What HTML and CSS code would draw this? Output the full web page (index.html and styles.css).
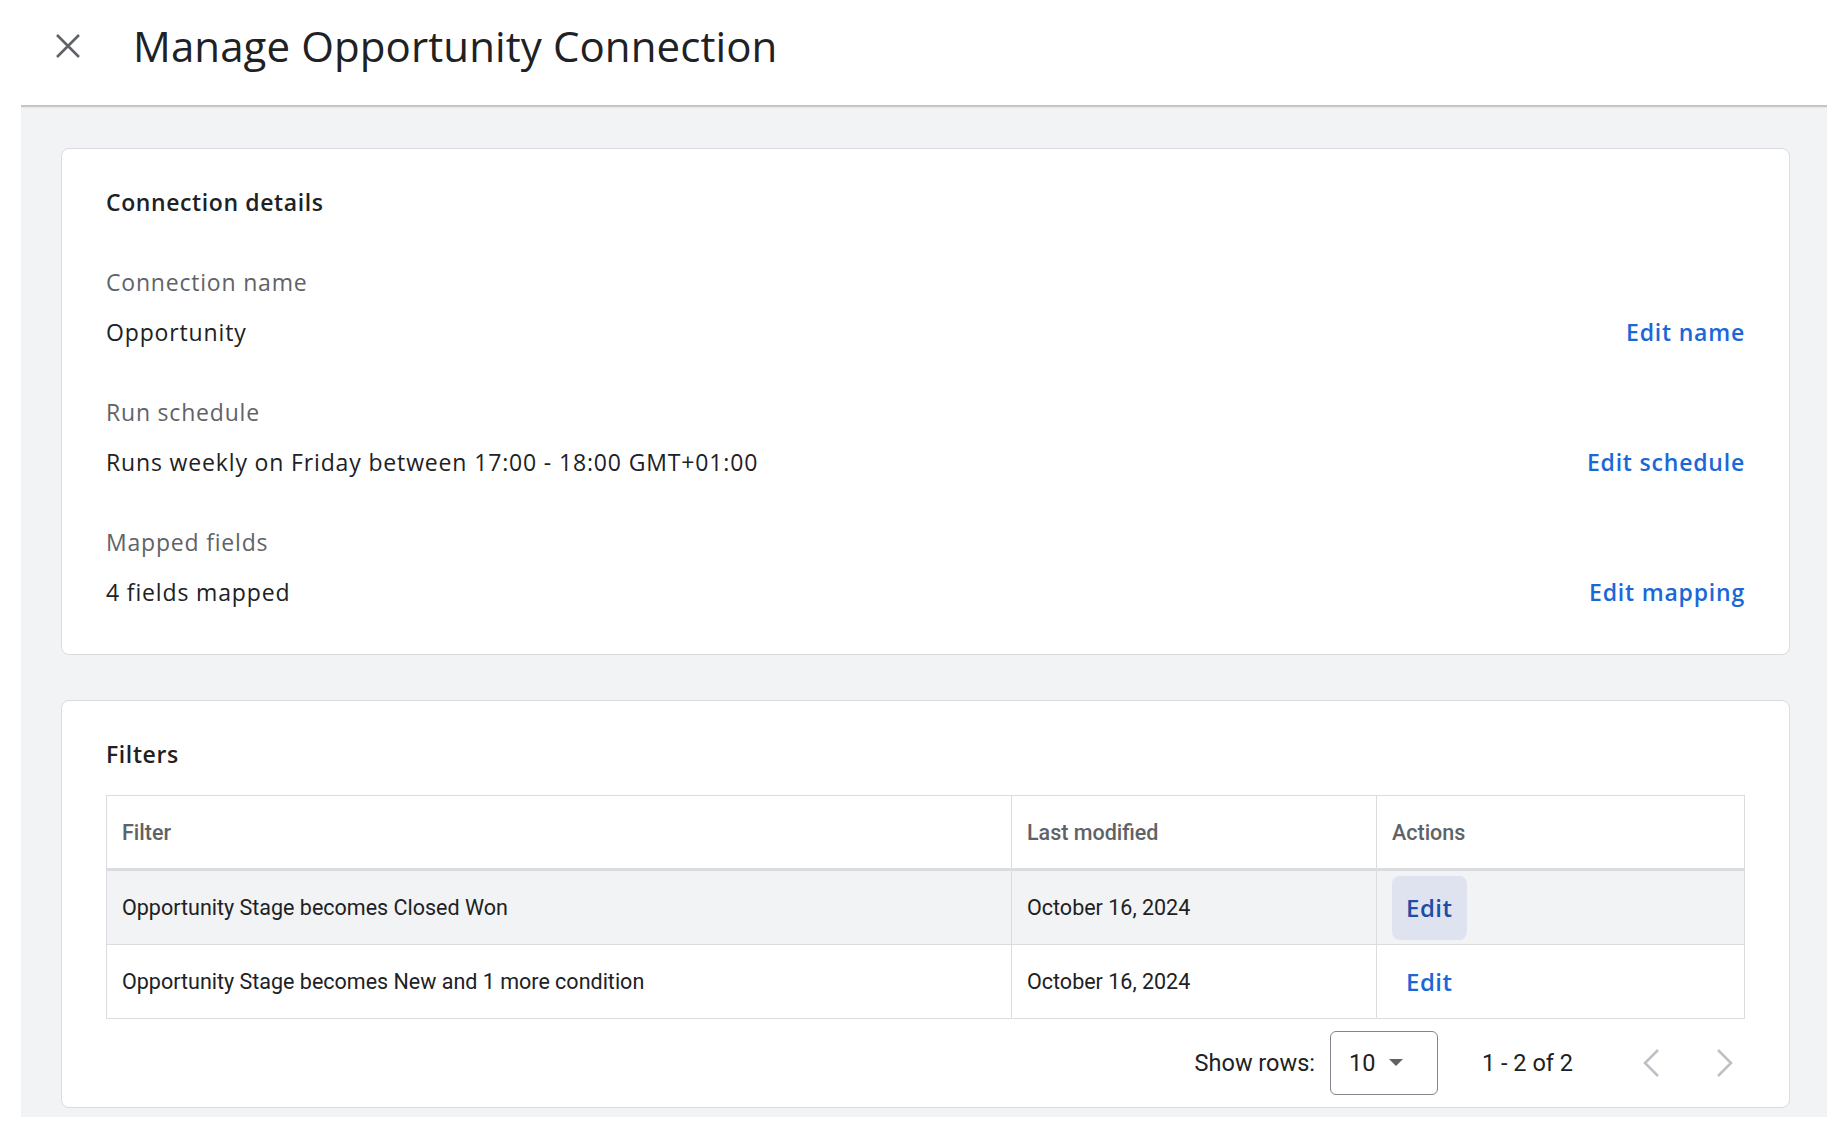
FILE: index.html
```html
<!DOCTYPE html>
<html lang="en">
<head>
    <meta charset="UTF-8">
    <meta name="viewport" content="width=device-width, initial-scale=1.0">
    <title>Manage Opportunity Connection</title>
    <link rel="stylesheet" href="styles.css">
</head>
<body>
    <header class="top-bar">
        <button type="button" class="btn-close" aria-label="Close">
            <svg width="26" height="26" viewBox="0 0 26 26">
                <path d="M2 2 L24 24 M24 2 L2 24" stroke="#5f6368" stroke-width="2.6" fill="none"/>
            </svg>
        </button>
        <h1>Manage Opportunity Connection</h1>
    </header>

    <main class="content">
        <section class="card details-card">
            <h2>Connection details</h2>

            <div class="field">
                <div class="field-label">Connection name</div>
                <div class="field-row">
                    <span class="field-value">Opportunity</span>
                    <a href="#" class="link">Edit name</a>
                </div>
            </div>

            <div class="field">
                <div class="field-label">Run schedule</div>
                <div class="field-row">
                    <span class="field-value">Runs weekly on Friday between 17:00 - 18:00 GMT+01:00</span>
                    <a href="#" class="link">Edit schedule</a>
                </div>
            </div>

            <div class="field">
                <div class="field-label">Mapped fields</div>
                <div class="field-row">
                    <span class="field-value">4 fields mapped</span>
                    <a href="#" class="link">Edit mapping</a>
                </div>
            </div>
        </section>

        <section class="card filters-card">
            <h2>Filters</h2>

            <table class="filters-table">
                <thead>
                    <tr>
                        <th class="col-filter">Filter</th>
                        <th class="col-date">Last modified</th>
                        <th class="col-actions">Actions</th>
                    </tr>
                </thead>
                <tbody>
                    <tr class="row-hover">
                        <td>Opportunity Stage becomes Closed Won</td>
                        <td>October 16, 2024</td>
                        <td><button type="button" class="btn-edit btn-edit-active">Edit</button></td>
                    </tr>
                    <tr>
                        <td>Opportunity Stage becomes New and 1 more condition</td>
                        <td>October 16, 2024</td>
                        <td><button type="button" class="btn-edit">Edit</button></td>
                    </tr>
                </tbody>
            </table>

            <div class="pagination">
                <span class="rows-label">Show rows:</span>
                <div class="rows-select">
                    <span>10</span>
                    <svg width="14" height="8" viewBox="0 0 14 8"><path d="M0 0 L14 0 L7 7 Z" fill="#5f6368"/></svg>
                </div>
                <span class="range">1 - 2 of 2</span>
                <div class="pager">
                    <button type="button" class="btn-page" aria-label="Previous page">
                        <svg width="20" height="30" viewBox="0 0 20 30"><path d="M17 2 L4 15 L17 28" stroke="#bdc1c6" stroke-width="2.6" fill="none"/></svg>
                    </button>
                    <button type="button" class="btn-page" aria-label="Next page">
                        <svg width="20" height="30" viewBox="0 0 20 30"><path d="M3 2 L16 15 L3 28" stroke="#bdc1c6" stroke-width="2.6" fill="none"/></svg>
                    </button>
                </div>
            </div>
        </section>
    </main>
</body>
</html>
```

FILE: styles.css
```css
body {
    margin: 0;
    background: #ffffff;
    font-family: 'Open Sans', 'Noto Sans', sans-serif;
    color: #202124;
}

.top-bar {
    height: 105px;
    display: flex;
    align-items: center;
    padding-left: 55px;
    box-sizing: border-box;
}

.btn-close {
    background: none;
    border: none;
    padding: 0;
    width: 26px;
    height: 26px;
    margin-bottom: 14px;
    cursor: pointer;
    display: flex;
}

.top-bar h1 {
    margin: 0 0 14px 52px;
    font-size: 42px;
    font-weight: 400;
    letter-spacing: 0.1px;
    color: #202124;
}

.content {
    margin: 0 15px 0 21px;
    height: 1012px;
    background: #f1f3f4;
    box-shadow: inset 0 3px 2px -1px rgba(0, 0, 0, 0.22);
    padding: 43px 37px 0 40px;
    box-sizing: border-box;
    overflow: hidden;
}

.card {
    background: #ffffff;
    border: 1px solid #dadce0;
    border-radius: 8px;
    padding: 38px 44px;
}

.card h2 {
    margin: 0;
    font-size: 23px;
    line-height: 30px;
    font-weight: 600;
    letter-spacing: 0.6px;
    color: #202124;
}

.details-card {
    padding-bottom: 47px;
}

.field {
    margin-top: 50px;
}

.field-label {
    font-size: 23px;
    line-height: 30px;
    letter-spacing: 0.8px;
    color: #5f6368;
}

.field-row {
    display: flex;
    justify-content: space-between;
    align-items: center;
    margin-top: 20px;
}

.field-value {
    font-size: 23px;
    line-height: 30px;
    letter-spacing: 0.85px;
    color: #202124;
}

.link {
    font-size: 23px;
    line-height: 30px;
    font-weight: 600;
    letter-spacing: 0.8px;
    color: #1a68d8;
    text-decoration: none;
}

.filters-card {
    margin-top: 45px;
    padding-top: 38px;
    padding-bottom: 12px;
}

.filters-table {
    width: 100%;
    margin-top: 26px;
    border-collapse: collapse;
    border: 1px solid #dadce0;
    font-family: Roboto, 'Liberation Sans', sans-serif;
    font-size: 21.5px;
}

.filters-table th {
    height: 72px;
    text-align: left;
    font-weight: 500;
    color: #5f6368;
    padding: 0 15px;
    border-left: 1px solid #dadce0;
    border-bottom: 3px solid #dadce0;
}

.filters-table td {
    height: 73px;
    padding: 0 15px;
    color: #202124;
    border-left: 1px solid #dadce0;
    border-bottom: 1px solid #dadce0;
}

.col-filter {
    width: 874px;
}

.col-date {
    width: 334px;
}

.row-hover td {
    background: #f1f3f4;
}

.btn-edit {
    height: 64px;
    padding: 0 14px;
    border: none;
    border-radius: 8px;
    background: transparent;
    font-family: 'Open Sans', sans-serif;
    font-size: 24px;
    font-weight: 600;
    letter-spacing: 0.5px;
    color: #1a68d8;
    cursor: pointer;
}

.btn-edit-active {
    background: #dfe3ef;
    color: #1c4ea5;
}

.pagination {
    display: flex;
    align-items: center;
    justify-content: flex-end;
    margin-top: 12px;
    font-family: Roboto, 'Liberation Sans', sans-serif;
    font-size: 23.5px;
    color: #202124;
}

.rows-select {
    width: 108px;
    height: 64px;
    box-sizing: border-box;
    margin-left: 15px;
    border: 1px solid #80868b;
    border-radius: 6px;
    display: flex;
    align-items: center;
    gap: 14px;
    padding-left: 18px;
}

.range {
    margin-left: 44px;
}

.pager {
    display: flex;
    gap: 34px;
    margin-left: 58px;
}

.btn-page {
    width: 40px;
    height: 48px;
    border: none;
    background: none;
    padding: 0;
    display: flex;
    align-items: center;
    justify-content: center;
    cursor: pointer;
}
```
